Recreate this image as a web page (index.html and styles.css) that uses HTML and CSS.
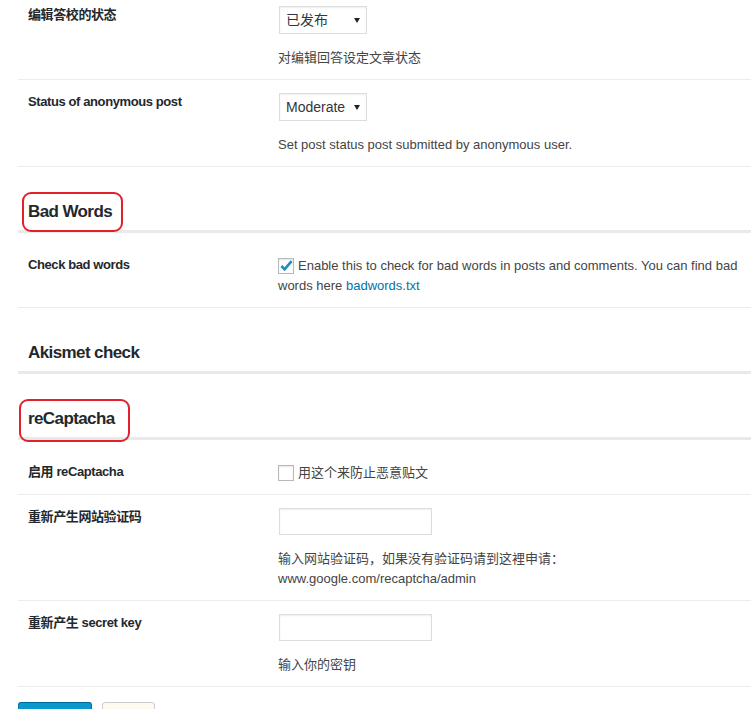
FILE: index.html
```html
<!DOCTYPE html>
<html lang="zh-CN">
<head>
<meta charset="utf-8">
<title>Settings</title>
<link rel="stylesheet" href="styles.css">
</head>
<body>
<div class="wrap">
  <div class="form-table first">
    <div class="row">
      <div class="th">编辑答校的状态</div>
      <div class="td">
        <div class="select"><span>已发布</span><svg class="arrow" width="6" height="5" viewBox="0 0 6 5"><polygon points="0,0 6,0 3,5"/></svg></div>
        <p class="description">对编辑回答设定文章状态</p>
      </div>
    </div>
    <div class="row">
      <div class="th">Status of anonymous post</div>
      <div class="td">
        <div class="select"><span>Moderate</span><svg class="arrow" width="6" height="5" viewBox="0 0 6 5"><polygon points="0,0 6,0 3,5"/></svg></div>
        <p class="description">Set post status post submitted by anonymous user.</p>
      </div>
    </div>
  </div>

  <h2 class="section">Bad Words<span class="mark mark-bad"></span></h2>
  <div class="form-table">
    <div class="row">
      <div class="th">Check bad words</div>
      <div class="td">
        <label class="check-label"><span class="checkbox"><svg width="16" height="16" viewBox="0 0 16 16"><path d="M3.4 8 L6.6 11.3 L13.6 3.2" fill="none" stroke="#1e8cbe" stroke-width="2.6"/></svg></span><span>Enable this to check for bad words in posts and comments. You can find bad</span> <span>words here</span> <a href="#">badwords.txt</a></label>
      </div>
    </div>
  </div>

  <h2 class="section">Akismet check</h2>

  <h2 class="section">reCaptacha<span class="mark mark-re"></span></h2>
  <div class="form-table">
    <div class="row">
      <div class="th">启用 reCaptacha</div>
      <div class="td">
        <label class="check-label"><span class="checkbox"></span>用这个来防止恶意贴文</label>
      </div>
    </div>
    <div class="row">
      <div class="th">重新产生网站验证码</div>
      <div class="td">
        <input class="regular-text" type="text">
        <p class="description">输入网站验证码，如果没有验证码请到这裡申请：www.google.com/recaptcha/admin</p>
      </div>
    </div>
    <div class="row">
      <div class="th">重新产生 secret key</div>
      <div class="td">
        <input class="regular-text" type="text">
        <p class="description">输入你的密钥</p>
      </div>
    </div>
  </div>

  <div class="submit">
    <button class="button button-primary" type="button" aria-label="保存设置"></button>
    <button class="button button-secondary" type="button" aria-label="重置"></button>
  </div>
</div>
</body>
</html>
```

FILE: styles.css
```css
html, body {
  margin: 0;
  padding: 0;
  background: #ffffff;
}

body {
  font-family: "Liberation Sans", "Noto Sans CJK SC", sans-serif;
  font-size: 13px;
  color: #444444;
}

.wrap {
  padding-left: 18px;
}

.form-table {
  margin-top: 10px;
}

.form-table.first {
  margin-top: -7px;
}

.row {
  display: grid;
  grid-template-columns: 260px 1fr;
  padding: 13px 0 11px;
  border-bottom: 1px solid #ececec;
}

.th {
  padding-left: 10px;
  font-weight: 700;
  line-height: 17px;
  letter-spacing: -0.4px;
  color: #23282d;
}

.td {
  padding-right: 10px;
  line-height: 20px;
}

.select {
  display: flex;
  align-items: center;
  justify-content: space-between;
  box-sizing: border-box;
  width: 88px;
  height: 28px;
  margin-left: 1px;
  padding: 0 6px 0 6px;
  border: 1px solid #dddddd;
  box-shadow: inset 0 1px 2px rgba(0, 0, 0, 0.07);
  font-size: 14px;
  color: #32373c;
}

.arrow {
  fill: #222222;
  margin-top: 1px;
}

.description {
  margin: 14px 0 0;
  line-height: 20px;
}

.regular-text {
  display: block;
  box-sizing: border-box;
  width: 153px;
  height: 27px;
  margin: 0 0 0 1px;
  padding: 0;
  border: 1px solid #dddddd;
  box-shadow: inset 0 1px 2px rgba(0, 0, 0, 0.07);
  background: #ffffff;
  outline: none;
}

.check-label {
  display: block;
}

.checkbox {
  display: inline-block;
  box-sizing: border-box;
  width: 16px;
  height: 16px;
  margin-right: 4px;
  vertical-align: -4px;
  border: 1px solid #b4b9be;
  box-shadow: inset 0 1px 2px rgba(0, 0, 0, 0.1);
  background: #ffffff;
  position: relative;
}

.checkbox svg {
  position: absolute;
  left: -1px;
  top: -1px;
}

a {
  color: #0073aa;
  text-decoration: none;
}

.section {
  position: relative;
  margin: 33px 0 0;
  padding: 0 0 6px 10px;
  font-size: 17px;
  line-height: 24px;
  font-weight: 700;
  letter-spacing: -0.6px;
  color: #23282d;
  border-bottom: 3px solid #e9e9e9;
}

.mark {
  position: absolute;
  box-sizing: border-box;
  border: 2px solid #e2222b;
  border-radius: 9px;
}

.mark-bad {
  left: 4px;
  top: -8px;
  width: 101px;
  height: 40px;
}

.mark-re {
  left: 1px;
  top: -8px;
  width: 111px;
  height: 43px;
}

.submit {
  display: flex;
  gap: 10px;
  margin-top: 15px;
  padding-bottom: 20px;
}

.button {
  box-sizing: border-box;
  height: 30px;
  padding: 0;
  border-radius: 3px;
}

.button-primary {
  width: 74px;
  background: #0a98cd;
  border: 1px solid #0073aa;
  border-top-color: #006799;
}

.button-secondary {
  width: 53px;
  background: #fffaf0;
  border: 1px solid #cccccc;
}
```
